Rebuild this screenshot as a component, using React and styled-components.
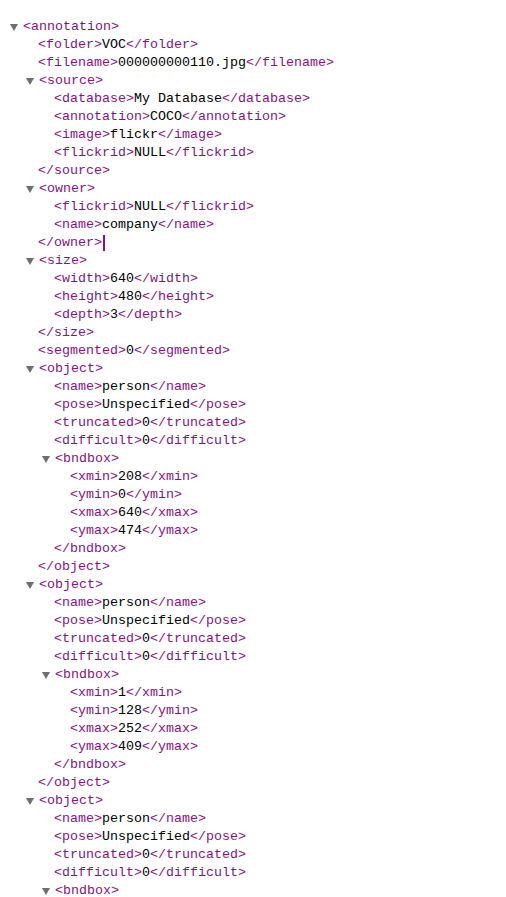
import React from "react";
import styled, { createGlobalStyle } from "styled-components";

const Global = createGlobalStyle`
  html, body { margin: 0; padding: 0; background: #ffffff; }
  body { font-family: "Liberation Mono", "DejaVu Sans Mono", monospace; }
`;

const Tree = styled.div`
  padding: 18px 0 0 10px;
  font-family: "Liberation Mono", "DejaVu Sans Mono", monospace;
  font-size: 13.333px;
  color: #000000;
  white-space: pre;
`;

const Row = styled.div`
  display: flex;
  align-items: center;
  height: 18px;
  line-height: 18px;
  padding-left: ${(p) => (p.$toggle ? 0 : 12)}px;
`;

const Toggle = styled.span`
  display: inline-flex;
  align-items: center;
  width: 13px;
  height: 18px;
  &::before {
    content: "";
    display: block;
    width: 0;
    height: 0;
    border-left: 4.5px solid transparent;
    border-right: 4.5px solid transparent;
    border-top: 7px solid #6e6e6e;
    margin-top: 1px;
  }
`;

const Tag = styled.span`
  color: #881280;
`;

const Value = styled.span`
  color: #000000;
`;

const Children = styled.div`
  margin-left: 16px;
`;

const Caret = styled.span`
  display: inline-block;
  width: 2px;
  height: 16px;
  margin-left: 1px;
  background: #881280;
`;

const leaf = (name, value) => ({ name, value });
const node = (name, children, opts = {}) => ({ name, children, ...opts });

const bnd = (a, b, c, d) =>
  node("bndbox", [leaf("xmin", a), leaf("ymin", b), leaf("xmax", c), leaf("ymax", d)]);

const obj = (box, opts) =>
  node(
    "object",
    [
      leaf("name", "person"),
      leaf("pose", "Unspecified"),
      leaf("truncated", "0"),
      leaf("difficult", "0"),
      box,
    ],
    opts
  );

const data = node("annotation", [
  leaf("folder", "VOC"),
  leaf("filename", "000000000110.jpg"),
  node("source", [
    leaf("database", "My Database"),
    leaf("annotation", "COCO"),
    leaf("image", "flickr"),
    leaf("flickrid", "NULL"),
  ]),
  node("owner", [leaf("flickrid", "NULL"), leaf("name", "company")], { caret: true }),
  node("size", [leaf("width", "640"), leaf("height", "480"), leaf("depth", "3")]),
  leaf("segmented", "0"),
  obj(bnd("208", "0", "640", "474")),
  obj(bnd("1", "128", "252", "409")),
  obj(node("bndbox", [], { partial: true }), { partial: true }),
], { partial: true });

function Node({ item }) {
  if (!item.children) {
    return (
      <Row>
        <Tag>{`<${item.name}>`}</Tag>
        <Value>{item.value}</Value>
        <Tag>{`</${item.name}>`}</Tag>
      </Row>
    );
  }
  return (
    <div>
      <Row $toggle>
        <Toggle />
        <Tag>{`<${item.name}>`}</Tag>
      </Row>
      {item.children.length > 0 && (
        <Children>
          {item.children.map((c, i) => (
            <Node key={i} item={c} />
          ))}
        </Children>
      )}
      {!item.partial && (
        <Row>
          <Tag>{`</${item.name}>`}</Tag>
          {item.caret && <Caret />}
        </Row>
      )}
    </div>
  );
}

export default function App() {
  return (
    <>
      <Global />
      <Tree>
        <Node item={data} />
      </Tree>
    </>
  );
}
